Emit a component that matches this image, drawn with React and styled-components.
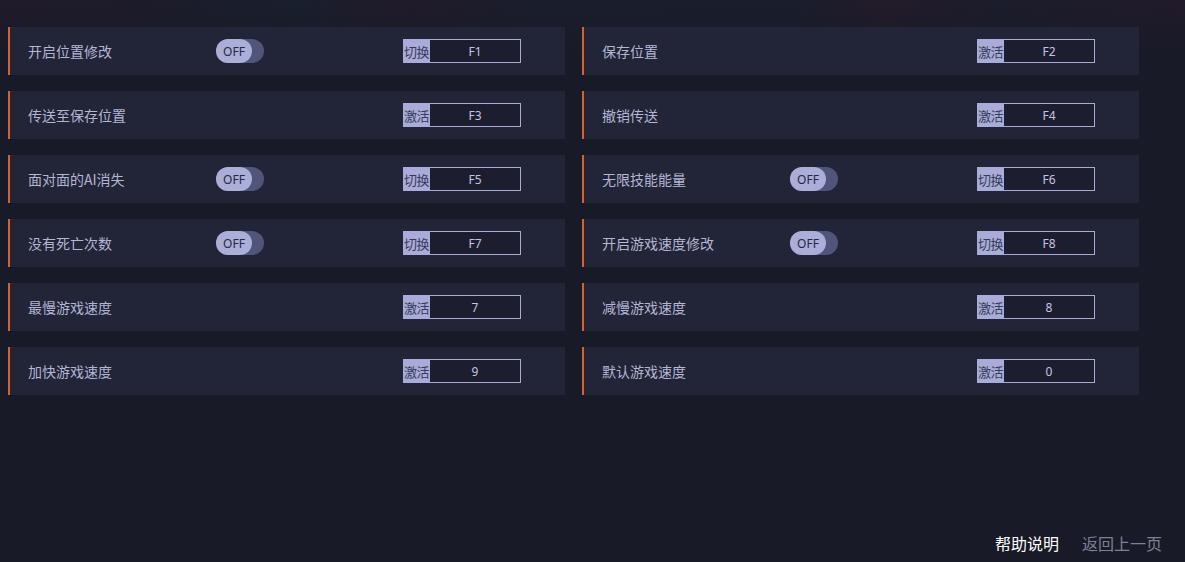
import React from "react";
import styled, { createGlobalStyle } from "styled-components";

const Global = createGlobalStyle`
  html, body { margin: 0; padding: 0; }
  body {
    width: 1185px;
    height: 562px;
    overflow: hidden;
    background: #181a27;
    font-family: "Noto Sans CJK SC", "Noto Sans", sans-serif;
  }
`;

const Page = styled.div`
  position: relative;
  width: 1185px;
  height: 562px;
  box-sizing: border-box;
  padding: 27px 0 0 8px;
  background:
    linear-gradient(180deg, rgba(24,26,39,0.1) 0px, rgba(24,26,39,0.5) 24px, #181a27 60px),
    linear-gradient(90deg, #221a2a 0px, #1d1c2b 160px, #19202e 300px, #231a2a 400px, #1b1e2d 520px, #1a1e2d 800px, #261a2a 880px, #1c1d2c 1000px, #231a2a 1185px);
  display: flex;
  flex-direction: column;
`;

const Grid = styled.div`
  display: grid;
  grid-template-columns: 557px 557px;
  column-gap: 17px;
  row-gap: 16px;
`;

const Row = styled.div`
  height: 48px;
  box-sizing: border-box;
  background: #222437;
  border-left: 2px solid #d8602c;
  padding-left: 18px;
  display: grid;
  grid-template-columns: 188px 187px 118px;
  align-items: center;
`;

const Label = styled.div`
  font-size: 14px;
  color: #b3b6d4;
  white-space: nowrap;
`;

const Toggle = styled.div`
  width: 48px;
  height: 24px;
  border-radius: 12px;
  background: #51557a;
  position: relative;
`;

const Knob = styled.div`
  position: absolute;
  left: 0;
  top: 0;
  width: 36px;
  height: 24px;
  border-radius: 12px;
  background: #aaaed8;
  color: #262840;
  font-family: "Noto Sans", sans-serif;
  font-size: 12px;
  display: flex;
  align-items: center;
  justify-content: center;
`;

const Key = styled.div`
  display: flex;
  height: 24px;
  width: 118px;
`;

const KeyTag = styled.div`
  width: 27px;
  background: #a9acd8;
  color: #383b58;
  font-size: 13px;
  display: flex;
  align-items: center;
  justify-content: center;
  white-space: nowrap;
  letter-spacing: -0.5px;
`;

const KeyValue = styled.div`
  flex: 1;
  box-sizing: border-box;
  border: 1px solid #a9acd0;
  border-left: none;
  background: #1c1e2f;
  color: #c3c6e2;
  font-family: "Noto Sans", sans-serif;
  font-size: 12px;
  display: flex;
  align-items: center;
  justify-content: center;
`;

const Footer = styled.div`
  position: absolute;
  right: 23px;
  bottom: 7px;
  display: flex;
  gap: 23px;
  font-size: 16px;
`;

const FooterLink = styled.span`
  color: ${(p) => (p.$active ? "#ffffff" : "#7d8096")};
`;

const items = [
  ["开启位置修改", true, "切换", "F1"],
  ["保存位置", false, "激活", "F2"],
  ["传送至保存位置", false, "激活", "F3"],
  ["撤销传送", false, "激活", "F4"],
  ["面对面的AI消失", true, "切换", "F5"],
  ["无限技能能量", true, "切换", "F6"],
  ["没有死亡次数", true, "切换", "F7"],
  ["开启游戏速度修改", true, "切换", "F8"],
  ["最慢游戏速度", false, "激活", "7"],
  ["减慢游戏速度", false, "激活", "8"],
  ["加快游戏速度", false, "激活", "9"],
  ["默认游戏速度", false, "激活", "0"],
];

export default function App() {
  return (
    <>
      <Global />
      <Page>
        <Grid>
          {items.map(([label, toggle, tag, key]) => (
            <Row key={label}>
              <Label>{label}</Label>
              <div>
                {toggle && (
                  <Toggle>
                    <Knob>OFF</Knob>
                  </Toggle>
                )}
              </div>
              <Key>
                <KeyTag>{tag}</KeyTag>
                <KeyValue>{key}</KeyValue>
              </Key>
            </Row>
          ))}
        </Grid>
        <Footer>
          <FooterLink $active>帮助说明</FooterLink>
          <FooterLink>返回上一页</FooterLink>
        </Footer>
      </Page>
    </>
  );
}
